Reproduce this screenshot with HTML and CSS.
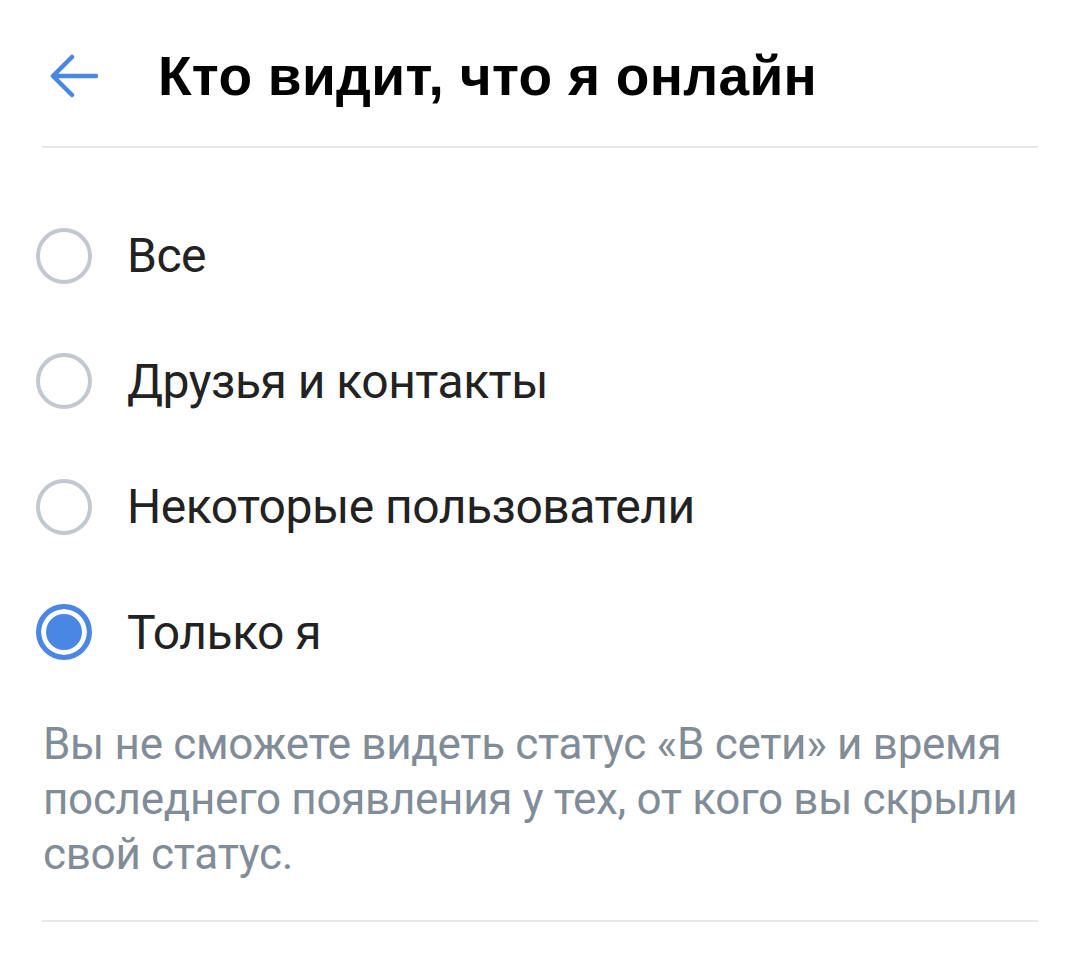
FILE: index.html
```html
<!DOCTYPE html>
<html lang="ru">
<head>
<meta charset="utf-8">
<link rel="stylesheet" href="styles.css">
</head>
<body>
<div class="page">
  <header class="header">
    <svg class="back" viewBox="0 0 48 44" width="48" height="44">
      <path d="M46 22 H4 M22 3 L3 22 L22 41" fill="none" stroke="#4a86e4" stroke-width="4.5" stroke-linecap="round" stroke-linejoin="round"/>
    </svg>
    <h1 class="title">Кто видит, что я онлайн</h1>
  </header>
  <div class="divider"></div>
  <ul class="options">
    <li class="option"><span class="radio"></span><span class="label">Все</span></li>
    <li class="option"><span class="radio"></span><span class="label">Друзья и контакты</span></li>
    <li class="option"><span class="radio"></span><span class="label">Некоторые пользователи</span></li>
    <li class="option"><span class="radio checked"></span><span class="label">Только я</span></li>
  </ul>
  <p class="note">Вы не сможете видеть статус «В сети» и время последнего появления у тех, от кого вы скрыли свой статус.</p>
  <div class="divider bottom"></div>
</div>
</body>
</html>
```
FILE: styles.css
```css
html, body {
  margin: 0;
  padding: 0;
  background: #ffffff;
}
.page {
  width: 1080px;
  height: 955px;
  font-family: Roboto, "Noto Sans", sans-serif;
  overflow: hidden;
}
.header {
  display: flex;
  align-items: center;
  height: 152px;
  padding-left: 50px;
  box-sizing: border-box;
}
.back {
  display: block;
  margin-top: -1px;
}
.title {
  margin: 0 0 0 60px;
  font-family: "Liberation Sans", Arial, sans-serif;
  font-size: 55px;
  font-weight: 700;
  color: #000;
  line-height: 1;
  letter-spacing: 0.3px;
}
.divider {
  height: 2px;
  background: #e7e8ea;
  margin: 0 42px;
}
.header + .divider {
  margin-top: -6px;
}
.options {
  list-style: none;
  margin: 0;
  padding: 45px 0 0 0;
}
.option {
  display: flex;
  align-items: center;
  height: 125.5px;
  padding-left: 36px;
}
.radio {
  width: 56px;
  height: 56px;
  box-sizing: border-box;
  border: 4.5px solid #c2c8d0;
  border-radius: 50%;
  flex: none;
}
.radio.checked {
  border: 5px solid #4a86e4;
  background: #4a86e4;
  box-shadow: inset 0 0 0 5px #fff;
}
.label {
  margin-left: 35px;
  font-size: 48px;
  color: #222;
  letter-spacing: -0.5px;
}
.note {
  margin: 22px 30px 0 43px;
  font-size: 44px;
  line-height: 55px;
  color: #818c99;
  letter-spacing: -0.3px;
}
.divider.bottom {
  margin-top: 38px;
  margin-right: 42px;
}
```
